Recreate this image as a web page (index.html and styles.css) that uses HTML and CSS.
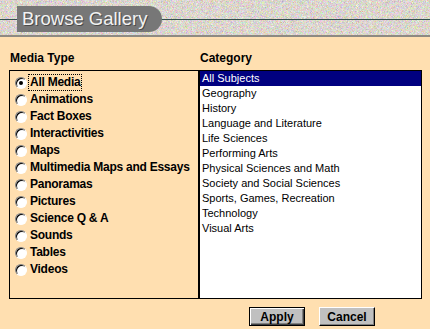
FILE: index.html
```html
<!DOCTYPE html>
<html lang="en">
<head>
  <meta charset="UTF-8">
  <title>Browse Gallery</title>
  <link rel="stylesheet" href="styles.css">
</head>
<body>
  <div class="header">
    <div class="tab">Browse Gallery</div>
  </div>

  <div class="panel">
    <div class="label">Media Type</div>
    <div class="label label-cat">Category</div>

    <div class="media-box">
      <div class="radio checked"><span class="dot"></span><span class="text focus">All Media</span></div>
      <div class="radio"><span class="dot"></span><span class="text">Animations</span></div>
      <div class="radio"><span class="dot"></span><span class="text">Fact Boxes</span></div>
      <div class="radio"><span class="dot"></span><span class="text">Interactivities</span></div>
      <div class="radio"><span class="dot"></span><span class="text">Maps</span></div>
      <div class="radio"><span class="dot"></span><span class="text">Multimedia Maps and Essays</span></div>
      <div class="radio"><span class="dot"></span><span class="text">Panoramas</span></div>
      <div class="radio"><span class="dot"></span><span class="text">Pictures</span></div>
      <div class="radio"><span class="dot"></span><span class="text">Science Q &amp; A</span></div>
      <div class="radio"><span class="dot"></span><span class="text">Sounds</span></div>
      <div class="radio"><span class="dot"></span><span class="text">Tables</span></div>
      <div class="radio"><span class="dot"></span><span class="text">Videos</span></div>
    </div>

    <ul class="listbox">
      <li class="selected">All Subjects</li>
      <li>Geography</li>
      <li>History</li>
      <li>Language and Literature</li>
      <li>Life Sciences</li>
      <li>Performing Arts</li>
      <li>Physical Sciences and Math</li>
      <li>Society and Social Sciences</li>
      <li>Sports, Games, Recreation</li>
      <li>Technology</li>
      <li>Visual Arts</li>
    </ul>
  </div>

  <div class="buttons">
    <button class="btn btn-default">Apply</button>
    <button class="btn">Cancel</button>
  </div>
</body>
</html>
```

FILE: styles.css
```css
body {
  margin: 0;
  padding: 0;
  width: 430px;
  height: 329px;
  overflow: hidden;
  background-color: #ffdfb0;
  font-family: "Liberation Sans", Arial, sans-serif;
  color: #000;
}

/* textured title strip */
.header {
  border-bottom: 2px solid #8e8a82;
  background-color: #aea9a1;
  background-image:
    linear-gradient(to bottom, transparent 19px, #34504e 19px, #34504e 20px, transparent 20px),
    url("data:image/svg+xml;utf8,<svg xmlns='http://www.w3.org/2000/svg' width='430' height='35'><filter id='n' x='0' y='0'><feTurbulence type='fractalNoise' baseFrequency='2.2' numOctaves='1' seed='7'/><feColorMatrix values='1.0 0 0 0 0.21  0 1.0 0 0 0.17  0 0 1.1 0 0.07  0 0 0 0 1'/></filter><rect width='430' height='35' filter='url(%23n)'/></svg>");
  padding-top: 6px;
  height: 29px;
}
.tab {
  margin-left: 17px;
  width: 140px;
  height: 26px;
  padding-left: 5px;
  background-color: #777;
  border-radius: 0 13px 13px 0;
  color: #f2f2f2;
  font-size: 18.5px;
  line-height: 26px;
  text-shadow: 1px 1px 0 #4a4a4a;
}

.panel {
  display: grid;
  grid-template-columns: 190px 223px;
  grid-template-rows: 14px 229px;
  row-gap: 5px;
  margin: 14px 0 0 9px;
}
.label {
  font-size: 12px;
  font-weight: bold;
  line-height: 14px;
  padding-left: 1px;
}

.media-box {
  border: 1px solid #000;
  box-sizing: border-box;
  padding: 3px 0 0 5px;
}
.radio {
  display: flex;
  align-items: center;
  height: 17px;
  font-size: 12px;
  font-weight: bold;
  letter-spacing: -0.25px;
}
.radio .dot {
  width: 12px;
  height: 12px;
  box-sizing: border-box;
  border-radius: 50%;
  border: 1px solid;
  border-color: #808080 #fff #fff #808080;
  background: #fff;
  box-shadow: inset 1px 1px 0 #000;
  position: relative;
  margin-right: 2px;
}
.radio.checked .dot::after {
  content: "";
  position: absolute;
  left: 3px;
  top: 3px;
  width: 4px;
  height: 4px;
  border-radius: 50%;
  background: #000;
}
.radio .text {
  display: inline-block;
  line-height: 15px;
  padding: 0 1px;
}
.radio .focus {
  outline: 1px dotted #000;
}

.listbox {
  margin: 0;
  padding: 0;
  list-style: none;
  border: 1px solid #000;
  box-sizing: border-box;
  background: #fff;
  font-size: 11px;
}
.listbox li {
  height: 15px;
  line-height: 15px;
  padding-left: 2px;
}
.listbox .selected {
  background: #000080;
  color: #fff;
}

.buttons {
  display: flex;
  gap: 14px;
  margin: 8px 0 0 249px;
}
.btn {
  width: 56px;
  height: 19px;
  padding: 0;
  margin: 0;
  font-family: inherit;
  font-size: 12px;
  font-weight: bold;
  background: #c0c0c0;
  border: 1px solid;
  border-color: #fff #000 #000 #fff;
  box-shadow: inset -1px -1px 0 #808080;
  color: #000;
}
.btn-default {
  border: 1px solid #000;
  box-shadow: inset 1px 1px 0 #fff, inset -1px -1px 0 #404040, inset -2px -2px 0 #808080;
}
```
